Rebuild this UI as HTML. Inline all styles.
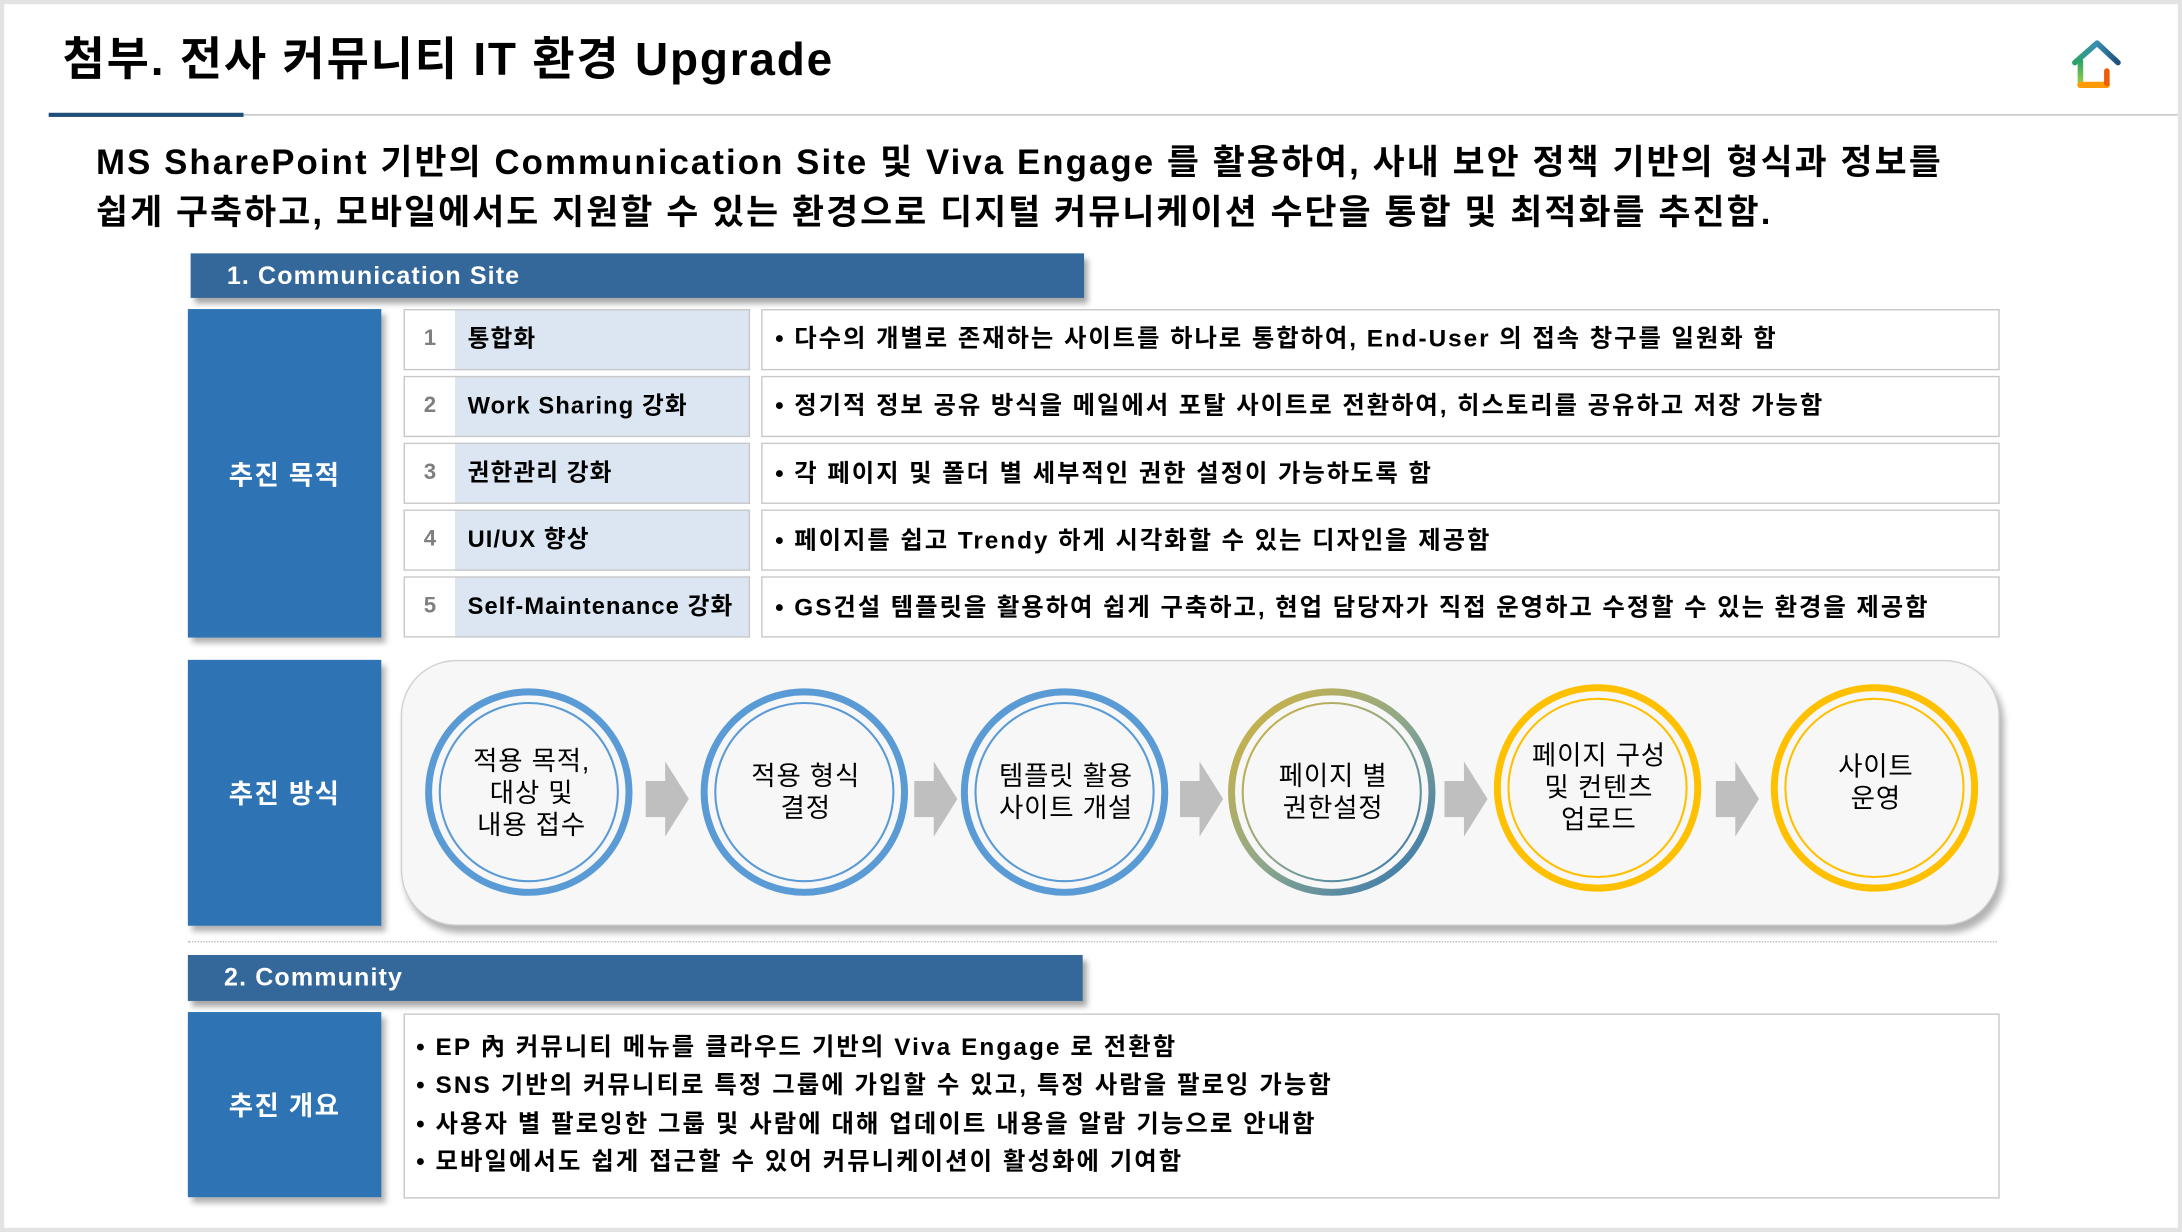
<!DOCTYPE html>
<html><head><meta charset="utf-8"><style>
*{margin:0;padding:0;box-sizing:border-box}
html,body{width:2182px;height:1232px;overflow:hidden;background:#e3e3e3}
#s{position:absolute;left:0;top:0;width:1568px;height:885px;transform:scale(1.39158,1.39209);transform-origin:0 0;font-family:"Liberation Sans","Noto Sans CJK KR",sans-serif;color:#000}
.a{position:absolute;white-space:nowrap}
.b{font-weight:bold}
.slide{left:3px;top:3px;width:1562px;height:879px;background:#fff}
.hdr{background:#34679a;color:#fff;font-weight:bold;font-size:18px;letter-spacing:0.8px;box-shadow:3px 4px 4px rgba(0,0,0,.35);padding-left:26px;line-height:33px}
.blk{background:#2e74b5;color:#fff;font-weight:bold;font-size:19px;display:flex;align-items:center;justify-content:center;box-shadow:3px 4px 4px rgba(0,0,0,.3);letter-spacing:1px}
.num{border:1px solid #c8c8c8;background:#fff;color:#7f7f7f;font-size:16px;font-weight:bold;text-align:center}
.lab{background:#dce6f2;border:1px solid #c8c8c8;border-left:none;font-weight:bold;font-size:17px;letter-spacing:0.8px;padding-left:9px}
.desc{border:1px solid #c8c8c8;background:#fff;font-weight:bold;font-size:17.5px;letter-spacing:1.4px;padding-left:9px}
.ct{font-size:19px;text-align:center;line-height:23px;letter-spacing:0.6px;transform:translateX(-50%)}
</style></head><body><div id="s">
<div class="a slide"></div>
<div class="a b" style="left:45px;top:21px;font-size:33px;line-height:44px;letter-spacing:1.3px">첨부. 전사 커뮤니티 IT 환경 Upgrade</div>
<div class="a" style="left:35px;top:82px;width:1530px;height:1px;background:#bfbfbf"></div>
<div class="a" style="left:35px;top:81px;width:140px;height:3px;background:#1f4e79"></div>
<svg class="a" style="left:1487px;top:27px" width="40" height="40" viewBox="0 0 40 40">
<defs><linearGradient id="hg" gradientUnits="userSpaceOnUse" x1="4" y1="0" x2="35" y2="0"><stop offset="0" stop-color="#2aa36b"/><stop offset="0.5" stop-color="#3a8fb0"/><stop offset="1" stop-color="#1c4f7c"/></linearGradient>
<linearGradient id="hg2" gradientUnits="userSpaceOnUse" x1="0" y1="17" x2="0" y2="34"><stop offset="0" stop-color="#2aa36b"/><stop offset="1" stop-color="#9bd33c"/></linearGradient></defs>
<path d="M4 18 L20 4 L35 18" fill="none" stroke="url(#hg)" stroke-width="4" stroke-linecap="round" stroke-linejoin="round"/>
<path d="M8 17 L8 33" stroke="url(#hg2)" stroke-width="4" stroke-linecap="round"/>
<path d="M8 34 L27 34" stroke="#ff9a00" stroke-width="4.5" stroke-linecap="round"/>
<path d="M27 33 L27 24" stroke="#f05a0a" stroke-width="4" stroke-linecap="round"/>
</svg>
<div class="a b" style="left:69px;top:99px;font-size:25px;line-height:36px;letter-spacing:1.5px">MS SharePoint 기반의 Communication Site 및 Viva Engage 를 활용하여, 사내 보안 정책 기반의 형식과 정보를</div>
<div class="a b" style="left:69px;top:135px;font-size:25px;line-height:36px;letter-spacing:1.5px">쉽게 구축하고, 모바일에서도 지원할 수 있는 환경으로 디지털 커뮤니케이션 수단을 통합 및 최적화를 추진함.</div>

<div class="a hdr" style="left:137px;top:182px;width:642px;height:32px">1. Communication Site</div>
<div class="a blk" style="left:135px;top:222px;width:139px;height:236px">추진 목적</div>

<div class="a num" style="left:290px;top:222px;width:38px;height:44px;line-height:42px">1</div><div class="a lab" style="left:327px;top:222px;width:212px;height:44px;line-height:42px">통합화</div><div class="a desc" style="left:547px;top:222px;width:890px;height:44px;line-height:40px">• 다수의 개별로 존재하는 사이트를 하나로 통합하여, End-User 의 접속 창구를 일원화 함</div>
<div class="a num" style="left:290px;top:270px;width:38px;height:44px;line-height:42px">2</div><div class="a lab" style="left:327px;top:270px;width:212px;height:44px;line-height:42px">Work Sharing 강화</div><div class="a desc" style="left:547px;top:270px;width:890px;height:44px;line-height:40px">• 정기적 정보 공유 방식을 메일에서 포탈 사이트로 전환하여, 히스토리를 공유하고 저장 가능함</div>
<div class="a num" style="left:290px;top:318px;width:38px;height:44px;line-height:42px">3</div><div class="a lab" style="left:327px;top:318px;width:212px;height:44px;line-height:42px">권한관리 강화</div><div class="a desc" style="left:547px;top:318px;width:890px;height:44px;line-height:42px">• 각 페이지 및 폴더 별 세부적인 권한 설정이 가능하도록 함</div>
<div class="a num" style="left:290px;top:366px;width:38px;height:44px;line-height:42px">4</div><div class="a lab" style="left:327px;top:366px;width:212px;height:44px;line-height:42px">UI/UX 향상</div><div class="a desc" style="left:547px;top:366px;width:890px;height:44px;line-height:42px">• 페이지를 쉽고 Trendy 하게 시각화할 수 있는 디자인을 제공함</div>
<div class="a num" style="left:290px;top:414px;width:38px;height:44px;line-height:42px">5</div><div class="a lab" style="left:327px;top:414px;width:212px;height:44px;line-height:42px">Self-Maintenance 강화</div><div class="a desc" style="left:547px;top:414px;width:890px;height:44px;line-height:42px">• GS건설 템플릿을 활용하여 쉽게 구축하고, 현업 담당자가 직접 운영하고 수정할 수 있는 환경을 제공함</div>

<div class="a blk" style="left:135px;top:474px;width:139px;height:191px">추진 방식</div>
<div class="a" style="left:288px;top:474px;width:1149px;height:191px;border-radius:40px;background:#f7f7f7;border:1px solid #d0d0d0;box-shadow:3px 5px 5px rgba(0,0,0,.3)"></div>
<svg class="a" style="left:288px;top:474px" width="1150" height="191" viewBox="288 474 1150 191">
<defs><linearGradient id="g4" x1="0" y1="0" x2="1" y2="1"><stop offset="0" stop-color="#d6b43a"/><stop offset="0.5" stop-color="#8fa88a"/><stop offset="1" stop-color="#2e74b5"/></linearGradient></defs>
<g fill="none">
<circle cx="380" cy="569" r="72" stroke="#5b9bd5" stroke-width="5"/><circle cx="380" cy="569" r="64" stroke="#5b9bd5" stroke-width="1.5"/>
<circle cx="578" cy="569" r="72" stroke="#5b9bd5" stroke-width="5"/><circle cx="578" cy="569" r="64" stroke="#5b9bd5" stroke-width="1.5"/>
<circle cx="765" cy="569" r="72" stroke="#5b9bd5" stroke-width="5"/><circle cx="765" cy="569" r="64" stroke="#5b9bd5" stroke-width="1.5"/>
<circle cx="957" cy="569" r="72" stroke="url(#g4)" stroke-width="5"/><circle cx="957" cy="569" r="64" stroke="url(#g4)" stroke-width="1.5"/>
<circle cx="1148" cy="566" r="72" stroke="#ffc000" stroke-width="5"/><circle cx="1148" cy="566" r="64" stroke="#ffc000" stroke-width="1.5"/>
<circle cx="1347" cy="566" r="72" stroke="#ffc000" stroke-width="5"/><circle cx="1347" cy="566" r="64" stroke="#ffc000" stroke-width="1.5"/>
</g>
<g fill="#bfbfbf">
<path d="M464 561h14v-14l17 27-17 27v-14h-14z"/>
<path d="M657 561h14v-14l17 27-17 27v-14h-14z"/>
<path d="M848 561h14v-14l17 27-17 27v-14h-14z"/>
<path d="M1038 561h14v-14l17 27-17 27v-14h-14z"/>
<path d="M1233 561h14v-14l17 27-17 27v-14h-14z"/>
</g>
</svg>
<div class="a ct" style="left:382px;top:536px">적용 목적,<br>대상 및<br>내용 접수</div>
<div class="a ct" style="left:579px;top:547px">적용 형식<br>결정</div>
<div class="a ct" style="left:766px;top:547px">템플릿 활용<br>사이트 개설</div>
<div class="a ct" style="left:958px;top:547px">페이지 별<br>권한설정</div>
<div class="a ct" style="left:1149px;top:532px">페이지 구성<br>및 컨텐츠<br>업로드</div>
<div class="a ct" style="left:1348px;top:540px">사이트<br>운영</div>

<div class="a" style="left:135px;top:676px;width:1300px;border-top:1px dotted #bfbfbf"></div>
<div class="a hdr" style="left:135px;top:686px;width:643px;height:33px;padding-left:26px">2. Community</div>
<div class="a blk" style="left:135px;top:727px;width:139px;height:133px">추진 개요</div>
<div class="a" style="left:290px;top:728px;width:1147px;height:133px;border:1px solid #c8c8c8;background:#fff"></div>
<div class="a b" style="left:299px;top:739px;font-size:17.5px;line-height:27.3px;letter-spacing:1.5px">• EP 內 커뮤니티 메뉴를 클라우드 기반의 Viva Engage 로 전환함<br>• SNS 기반의 커뮤니티로 특정 그룹에 가입할 수 있고, 특정 사람을 팔로잉 가능함<br>• 사용자 별 팔로잉한 그룹 및 사람에 대해 업데이트 내용을 알람 기능으로 안내함<br>• 모바일에서도 쉽게 접근할 수 있어 커뮤니케이션이 활성화에 기여함</div>
</div></body></html>
